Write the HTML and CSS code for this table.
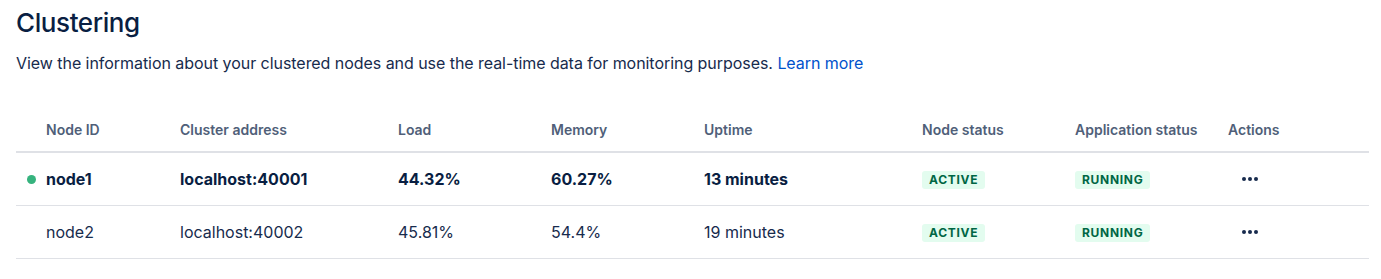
FILE: index.html
```html
<!DOCTYPE html>
<html lang="en">
<head>
<meta charset="utf-8">
<title>Clustering</title>
<link rel="stylesheet" href="styles.css">
</head>
<body>
<main class="page">
  <h1 class="title">Clustering</h1>
  <p class="intro">View the information about your clustered nodes and use the real-time data for monitoring purposes. <a class="link" href="#">Learn more</a></p>
  <div class="table">
    <div class="row head">
      <div class="cell first"><span class="dot-slot"></span>Node ID</div>
      <div class="cell">Cluster address</div>
      <div class="cell">Load</div>
      <div class="cell">Memory</div>
      <div class="cell">Uptime</div>
      <div class="cell">Node status</div>
      <div class="cell">Application status</div>
      <div class="cell">Actions</div>
    </div>
    <div class="row body current">
      <div class="cell first"><span class="dot-slot"><span class="dot"></span></span>node1</div>
      <div class="cell">localhost:40001</div>
      <div class="cell">44.32%</div>
      <div class="cell">60.27%</div>
      <div class="cell">13 minutes</div>
      <div class="cell"><span class="lozenge">Active</span></div>
      <div class="cell"><span class="lozenge">Running</span></div>
      <div class="cell"><span class="more"><i></i><i></i><i></i></span></div>
    </div>
    <div class="row body">
      <div class="cell first"><span class="dot-slot"></span>node2</div>
      <div class="cell">localhost:40002</div>
      <div class="cell">45.81%</div>
      <div class="cell">54.4%</div>
      <div class="cell">19 minutes</div>
      <div class="cell"><span class="lozenge">Active</span></div>
      <div class="cell"><span class="lozenge">Running</span></div>
      <div class="cell"><span class="more"><i></i><i></i><i></i></span></div>
    </div>
  </div>
</main>
</body>
</html>
```

FILE: styles.css
```css
* { box-sizing: border-box; }
html, body { margin: 0; background: #fff; }
body {
  font-family: Inter, "Noto Sans", "Liberation Sans", sans-serif;
  color: #172B4D;
}
.page { padding: 6px 12px 0 16px; }
.title {
  margin: 0;
  font-size: 26px;
  line-height: 34px;
  font-weight: 500;
  color: #091E42;
  letter-spacing: -0.4px;
}
.intro {
  margin: 13px 0 0 0;
  font-size: 16px;
  line-height: 20px;
  color: #172B4D;
  letter-spacing: -0.05px;
}
.link { color: #0052CC; text-decoration: none; }
.table { margin-top: 35px; }
.row {
  display: grid;
  grid-template-columns: 164px 218px 153px 153px 218px 153px 153px 1fr;
  align-items: center;
}
.row.head {
  height: 45px;
  border-bottom: 2px solid #DFE1E6;
  font-size: 14px;
  font-weight: 600;
  color: #505F79;
}
.row.body {
  height: 53px;
  border-bottom: 1px solid #DFE1E6;
  font-size: 16px;
  color: #172B4D;
}
.row.current { font-weight: 700; color: #091E42; }
.cell { display: flex; align-items: center; white-space: nowrap; }
.dot-slot {
  width: 30px;
  display: flex;
  align-items: center;
  padding-left: 11px;
}
.dot {
  width: 9px;
  height: 9px;
  border-radius: 50%;
  background: #36B37E;
}
.lozenge {
  display: inline-block;
  background: #E3FCEF;
  color: #006644;
  font-size: 12px;
  font-weight: 700;
  line-height: 18px;
  padding: 0 7px;
  border-radius: 3px;
  text-transform: uppercase;
  letter-spacing: 0.7px;
  margin-top: 2px;
}
.more {
  display: flex;
  gap: 2px;
  margin-left: 14px;
}
.more i {
  width: 4px;
  height: 4px;
  border-radius: 50%;
  background: #172B4D;
}
```
